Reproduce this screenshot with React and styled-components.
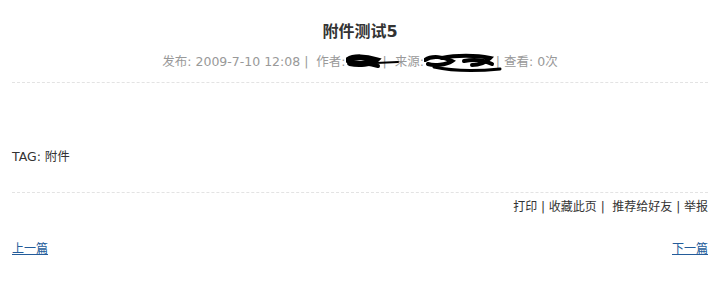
import styled, { createGlobalStyle } from "styled-components";

const GlobalStyle = createGlobalStyle`
  body {
    margin: 0;
    background: #fff;
    font-family: "DejaVu Sans", "Noto Sans CJK SC", sans-serif;
    font-size: 12px;
    color: #333;
  }
`;

function AuthorScribble() {
    return (
        <Scribble viewBox="0 0 56 20" width="56" height="20">
            <path d="M2 8 C8 4 20 5 30 8 C26 12 12 13 4 11" stroke="#000" strokeWidth="6" strokeLinecap="round" fill="none" />
            <path d="M6 11 C14 10 24 12 32 14" stroke="#000" strokeWidth="4" strokeLinecap="round" fill="none" />
            <path d="M30 11 L52 10" stroke="#000" strokeWidth="2" strokeLinecap="round" fill="none" />
        </Scribble>
    );
}

function SourceScribble() {
    return (
        <Scribble viewBox="0 0 80 22" width="80" height="22">
            <path d="M1 8 C8 3 20 5 28 9 C22 13 10 14 4 12" stroke="#000" strokeWidth="4" strokeLinecap="round" fill="none" />
            <path d="M18 6 C32 3 52 3 66 6 C62 10 56 13 48 13" stroke="#000" strokeWidth="4" strokeLinecap="round" fill="none" />
            <path d="M10 15 C28 19 55 19 76 17" stroke="#000" strokeWidth="3" strokeLinecap="round" fill="none" />
            <path d="M40 9 C50 7 60 8 68 12" stroke="#000" strokeWidth="4" strokeLinecap="round" fill="none" />
        </Scribble>
    );
}

export default function App() {
    return (
        <>
            <GlobalStyle />
            <Page>
                <Title>附件测试5</Title>
                <Meta>
                    发布: 2009-7-10 12:08 |&nbsp; 作者:
                    <Redacted $w={33}>
                        某某
                        <AuthorScribble />
                    </Redacted>
                    {" "}|&nbsp; 来源:
                    <Redacted $w={68}>
                        某某网站
                        <SourceScribble />
                    </Redacted>
                    {" "}| 查看: 0次
                </Meta>
                <Divider />
                <Body />
                <Tag>TAG: 附件</Tag>
                <Divider $gap={25} />
                <Tools>
                    打印 | 收藏此页 |&nbsp; 推荐给好友 | 举报
                </Tools>
                <Pager>
                    <PageLink href="#">上一篇</PageLink>
                    <PageLink href="#">下一篇</PageLink>
                </Pager>
            </Page>
        </>
    );
}

const Page = styled.div`
    padding: 0 0 0 12px;
`;

const Title = styled.h1`
    margin: 0;
    padding-top: 20px;
    height: 24px;
    line-height: 24px;
    text-align: center;
    font-size: 16px;
    font-weight: bold;
    color: #333;
`;

const Meta = styled.div`
    margin-top: 8px;
    line-height: 20px;
    text-align: center;
    font-size: 12.5px;
    color: #999;
`;

const Redacted = styled.span`
    position: relative;
    display: inline-block;
    width: ${(p) => p.$w}px;
    height: 20px;
    vertical-align: top;
    overflow: visible;
    white-space: nowrap;
    color: transparent;
`;

const Scribble = styled.svg`
    position: absolute;
    left: 0;
    top: 0;
`;

const Divider = styled.div`
    margin-top: ${(p) => p.$gap ?? 10}px;
    border-top: 1px dashed #e3e3e3;
`;

const Body = styled.div`
    height: 64px;
`;

const Tag = styled.div`
    line-height: 20px;
    font-size: 12.5px;
    color: #333;
`;

const Tools = styled.div`
    margin-top: 4px;
    line-height: 20px;
    text-align: right;
    font-size: 12px;
    color: #333;
`;

const Pager = styled.div`
    display: flex;
    justify-content: space-between;
    margin-top: 22px;
    line-height: 20px;
    font-size: 12px;
`;

const PageLink = styled.a`
    color: #245c9a;
    text-decoration: underline;
`;
